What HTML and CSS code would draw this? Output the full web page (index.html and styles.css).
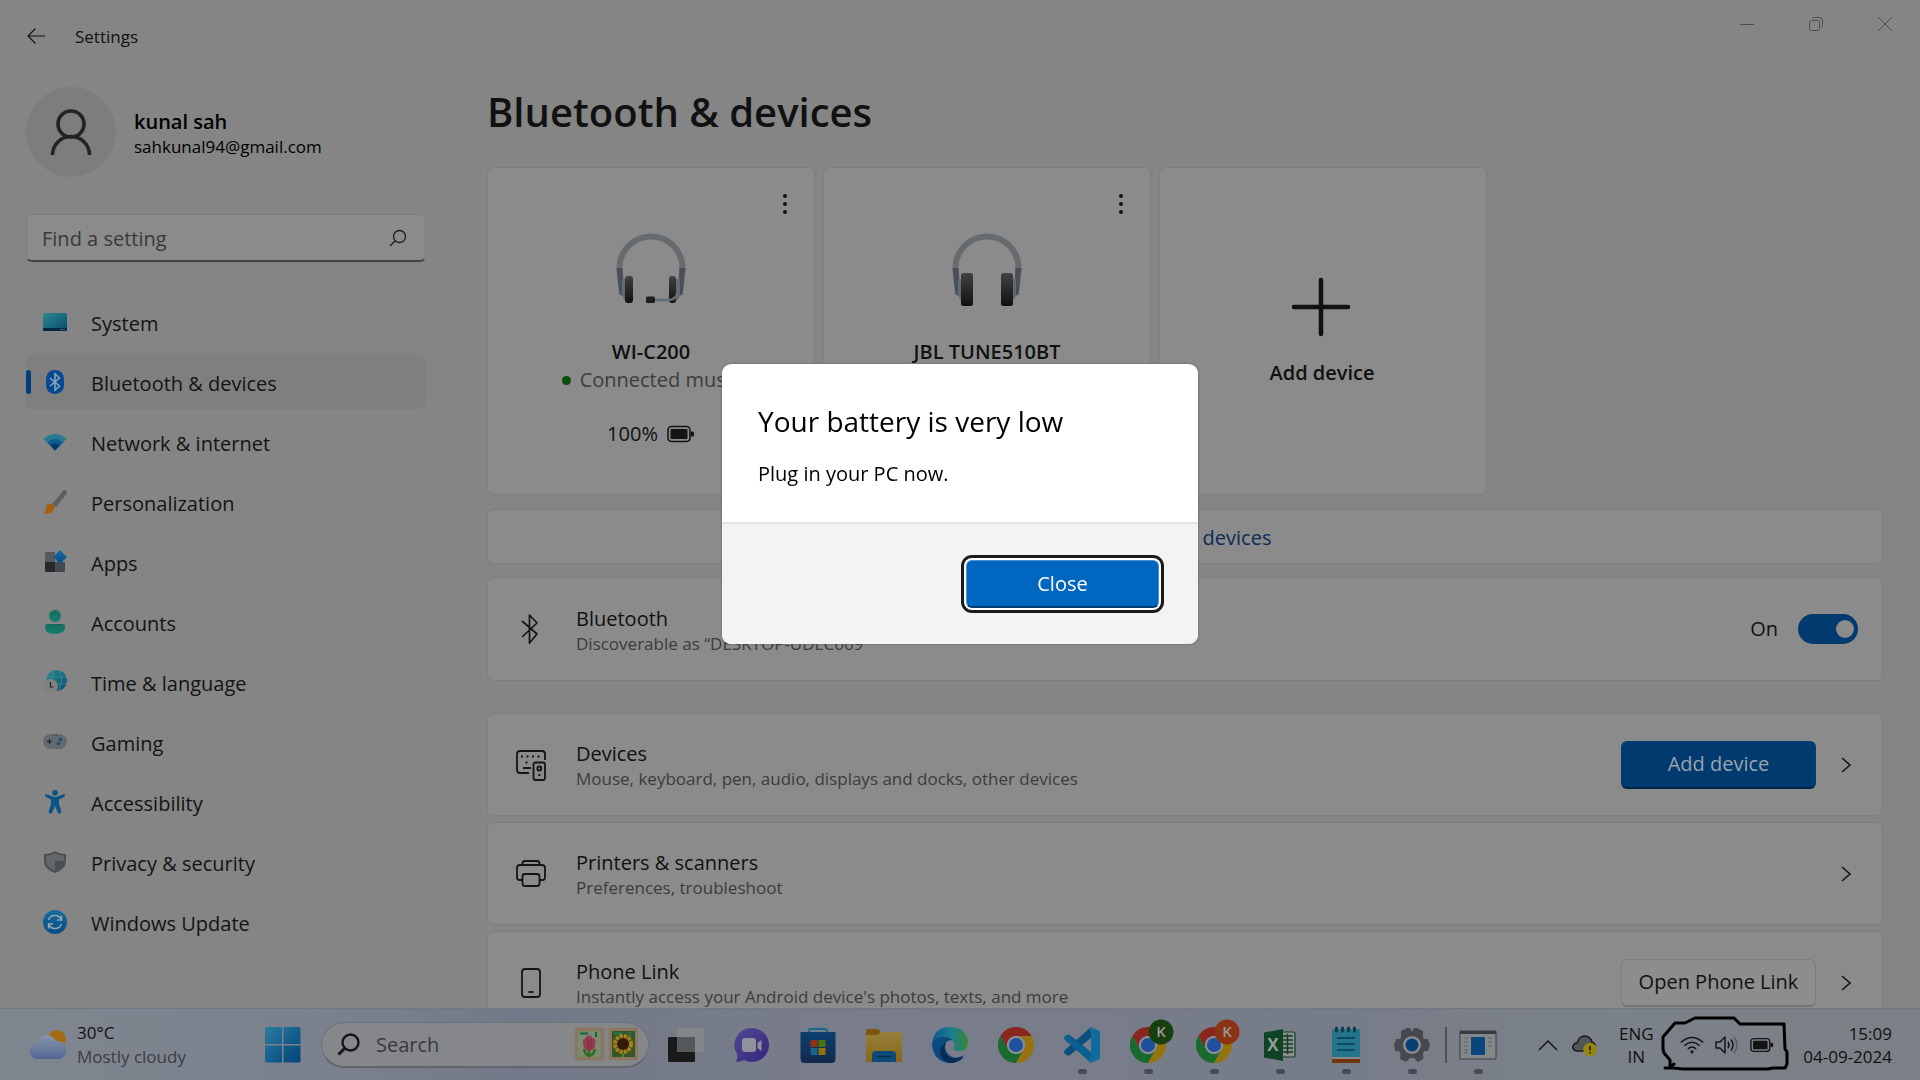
FILE: index.html
```html
<!DOCTYPE html>
<html lang="en">
<head>
<meta charset="utf-8">
<title>Settings</title>
<link rel="stylesheet" href="styles.css">
</head>
<body>
<svg class="defs" aria-hidden="true">
  <defs>
    <linearGradient id="g-screen" x1="0" y1="0" x2="1" y2="1"><stop offset="0" stop-color="#2a8a8c"/><stop offset="1" stop-color="#0b4a73"/></linearGradient>
    <linearGradient id="g-blue" x1="0" y1="0" x2="1" y2="1"><stop offset="0" stop-color="#2a7d9f"/><stop offset="1" stop-color="#02437a"/></linearGradient>
    <linearGradient id="g-sky" x1="0" y1="0" x2="0" y2="1"><stop offset="0" stop-color="#156c9e"/><stop offset="1" stop-color="#064c86"/></linearGradient>
    <linearGradient id="g-teal" x1="0" y1="0" x2="0" y2="1"><stop offset="0" stop-color="#176a5c"/><stop offset="1" stop-color="#148070"/></linearGradient>
    <linearGradient id="g-pad" x1="0" y1="0" x2="0" y2="1"><stop offset="0" stop-color="#424242"/><stop offset="1" stop-color="#101010"/></linearGradient>
    <linearGradient id="g-cloud" x1="0" y1="0" x2="0" y2="1"><stop offset="0" stop-color="#8795aa"/><stop offset="1" stop-color="#536694"/></linearGradient>
    <linearGradient id="g-chat" x1="0" y1="0" x2="1" y2="1"><stop offset="0" stop-color="#504a91"/><stop offset="1" stop-color="#35247f"/></linearGradient>
    <linearGradient id="g-store" x1="0" y1="0" x2="0" y2="1"><stop offset="0" stop-color="#0b3f70"/><stop offset="1" stop-color="#14294b"/></linearGradient>
    <linearGradient id="g-folder" x1="0" y1="0" x2="0" y2="1"><stop offset="0" stop-color="#94803c"/><stop offset="1" stop-color="#8b6716"/></linearGradient>
    <linearGradient id="g-edge" x1="0" y1="0" x2="1" y2="0"><stop offset="0" stop-color="#0c568a"/><stop offset=".5" stop-color="#1a7c93"/><stop offset="1" stop-color="#36863a"/></linearGradient>
    <symbol id="chrome" viewBox="0 0 24 24">
      <path fill="#8a2620" d="M1.6 6A12 12 0 0 1 22.4 6H12A6 6 0 0 0 6.8 15z"/>
      <path fill="#186a2f" d="M1.6 6 6.8 15A6 6 0 0 0 17.2 15L12 24A12 12 0 0 1 1.6 6z"/>
      <path fill="#96730f" d="M22.4 6A12 12 0 0 1 12 24l5.200-9A6 6 0 0 0 12 6z"/>
      <circle cx="12" cy="12" r="6" fill="#8d8f93"/><circle cx="12" cy="12" r="4.700" fill="#1f4f9f"/>
    </symbol>
    <symbol id="chevron" viewBox="0 0 12 18"><path d="M2 2l8 7-8 7" fill="none" stroke="#141414" stroke-width="1.600"/></symbol>
    <symbol id="band" viewBox="0 0 70 74">
      <path d="M3.500 38v-3a31.500 31.500 0 0 1 63 0v3" fill="none" stroke="#666b70" stroke-width="6"/>
      <path d="M.5 35h6l2 27q-5 2-5.500-3zM69.500 35h-6l-2 27q5 2 5.500-3z" fill="#4a5056"/>
      <path d="M6 46h4v22q-4-3-4-8zM64 46h-4v22q4-3 4-8z" fill="#626a72"/>
    </symbol>
    <symbol id="battery" viewBox="0 0 28 18">
      <rect x="1" y="1.500" width="22" height="15" rx="3.500" fill="none" stroke="#141414" stroke-width="1.600"/>
      <rect x="3.500" y="4" width="17" height="10" rx="1" fill="#141414"/><path d="M24 6.500h1.500q1.500 0 1.500 1.500v2q0 1.500-1.500 1.500H24z" fill="#141414"/>
    </symbol>
  </defs>
</svg>

<div class="desktop">
  <div class="window">
    <header class="titlebar">
      <button class="back" aria-label="Back"><svg width="20" height="18" viewBox="0 0 20 18"><path d="M9.500 1.500 2 9l7.500 7.500M2 9h17" fill="none" stroke="#141414" stroke-width="1.200"/></svg></button>
      <span class="app-name">Settings</span>
      <div class="controls">
        <button aria-label="Minimize"><svg width="16" height="16"><path d="M1 8.500h14" stroke="#4c4c4c"/></svg></button>
        <button aria-label="Restore"><svg width="16" height="16" fill="none" stroke="#4c4c4c"><rect x="1.500" y="4.500" width="10" height="10" rx="2"/><path d="M4.500 2.500q.5-1 2-1h5q3 0 3 3v5q0 1.500-1 2"/></svg></button>
        <button aria-label="Close window"><svg width="16" height="16"><path d="M1 1l14 14M15 1 1 15" stroke="#4c4c4c"/></svg></button>
      </div>
    </header>

    <div class="body">
      <aside class="sidebar">
        <div class="profile">
          <div class="avatar"><svg width="42" height="48" viewBox="0 0 42 48" fill="none" stroke="#232323" stroke-width="3.600"><circle cx="21" cy="16" r="13"/><path d="M2.500 47a18.500 18.500 0 0 1 37 0"/></svg></div>
          <div class="who"><strong>kunal sah</strong><span>sahkunal94@gmail.com</span></div>
        </div>
        <div class="find">
          <input type="text" placeholder="Find a setting" aria-label="Find a setting">
          <svg width="18" height="18" viewBox="0 0 18 18" fill="none" stroke="#202020" stroke-width="1.300"><circle cx="10.500" cy="7.500" r="6"/><path d="M6.200 11.800 1 17"/></svg>
        </div>
        <nav class="nav">
          <a href="#"><svg viewBox="0 0 24 24"><rect y="3" width="24" height="18" rx="1.500" fill="url(#g-screen)"/><path d="M0 18h24v1.500q0 1.500-1.500 1.500h-21Q0 21 0 19.500z" fill="#0a2740"/><path d="M18 19.500h1M20.500 19.500h1" stroke="#7aa"/></svg>System</a>
          <a href="#" class="active" aria-current="page"><svg viewBox="0 0 24 24"><rect x="3" width="18" height="24" rx="8.500" fill="#064a92"/><path d="M7 8l9.500 8-4.500 4V4l4.500 4L7 16" fill="none" stroke="#92a5ba" stroke-width="1.500"/></svg>Bluetooth &amp; devices</a>
          <a href="#"><svg viewBox="0 0 24 24"><path d="M.5 9Q12-1 23.500 9L12 20.500z" fill="#267a92"/><path d="M4 12.500q8-7 16 0l-8 8z" fill="#0f5a8c"/><path d="M7.500 15.500q4.500-4 9 0l-4.500 5z" fill="#06366a"/></svg>Network &amp; internet</a>
          <a href="#"><svg viewBox="0 0 24 24"><path d="M22 0q3 0 1.500 4L13 17l-4-3L20 1q1-1 2-1z" fill="#5b6065"/><path d="M7 13.500q5 .5 4.500 5Q9 25 0 23.500q3-2 3-5.500 0-4 4-4.500z" fill="#a0600e"/></svg>Personalization</a>
          <a href="#"><svg viewBox="0 0 24 24"><path d="M2 3.500q0-1.500 1.500-1.500H12v10H2z" fill="#54595e"/><path d="M2 12h10v10H3.500Q2 22 2 20.500z" fill="#272a2d"/><path d="M12 12h10v8.500q0 1.500-1.500 1.500H12z" fill="#45494d"/><path d="M17 0l7 7-7 7-6.500-7z" fill="url(#g-sky)"/></svg>Apps</a>
          <a href="#"><svg viewBox="0 0 24 24" fill="url(#g-teal)"><circle cx="12" cy="6" r="6"/><path d="M4.500 14h15q2.500 0 2.500 3 0 7-10 7T2 17q0-3 2.500-3z"/></svg>Accounts</a>
          <a href="#"><svg viewBox="0 0 24 24"><circle cx="13.500" cy="10.500" r="10.500" fill="url(#g-screen)"/><path d="M4 7h19M10 14h13M11 1q-4 10 1 20M16 1q5 9 0 19" fill="none" stroke="#358f9c" stroke-width=".8"/><circle cx="7.500" cy="16.500" r="7.500" fill="#818181"/><path d="M7.500 12v5h3" fill="none" stroke="#222" stroke-width="1.200"/></svg>Time &amp; language</a>
          <a href="#"><svg viewBox="0 0 24 24"><rect y="4" width="24" height="15" rx="7.500" fill="#64696f"/><path d="M4 11.500h5M6.500 9v5" stroke="#222" stroke-width="1.200"/><circle cx="17.500" cy="9.500" r="1.700" fill="#124c82"/><circle cx="15.500" cy="13.500" r="1.700" fill="#124c82"/><path d="M10.500 5.500h1M13 5.500h1" stroke="#333"/></svg>Gaming</a>
          <a href="#"><svg viewBox="0 0 24 24" fill="#0b5488"><circle cx="12" cy="2.800" r="2.800"/><path d="M3 4q7 3 9 3t9-3q2 1 0 3l-5 2.500V14l2.500 8q-1.500 3-3.500 1l-3-7-3 7q-2 2-3.500-1L8 14V9.500L3 7q-2-2 0-3z"/></svg>Accessibility</a>
          <a href="#"><svg viewBox="0 0 24 24"><path d="M12 1q4 3 11 3v7q0 8-11 12Q1 19 1 11V4q7 0 11-3z" fill="#4b4e51"/><path d="M12 3q3.500 2.500 9 2.500V11H12zM12 3v18Q3 17 3 11V5.500Q8.500 5.500 12 3z" fill="#63676a"/></svg>Privacy &amp; security</a>
          <a href="#"><svg viewBox="0 0 24 24"><circle cx="12" cy="12" r="12" fill="url(#g-sky)"/><path d="M5.500 10q2-5 7-4.500 3.500 0 6 4M18.500 5.500v4.500H14M18.500 14q-2 5-7 4.500-3.500 0-6-4M5.500 18.500V14H10" fill="none" stroke="#9aa5ad" stroke-width="1.500"/></svg>Windows Update</a>
        </nav>
      </aside>

      <main class="content">
        <h1>Bluetooth &amp; devices</h1>
        <section class="cards">
          <article class="card">
            <button class="more" aria-label="More options for WI-C200"><svg width="4" height="20" fill="#141414"><circle cx="2" cy="2" r="2"/><circle cx="2" cy="10" r="2"/><circle cx="2" cy="18" r="2"/></svg></button>
            <svg class="phones" viewBox="0 0 70 74"><use href="#band"/><rect x="9" y="43" width="8" height="27" rx="3" fill="url(#g-pad)"/><rect x="53" y="43" width="7" height="27" rx="3" fill="url(#g-pad)"/><path d="M62 46v10q0 11-10 11H38" fill="none" stroke="#636b73" stroke-width="2.500"/><rect x="30" y="63.500" width="9" height="6.500" rx="1.500" fill="#1f1f1f"/></svg>
            <h2>WI-C200</h2>
            <p class="status"><span class="dot"></span>Connected music</p>
            <p class="charge">100% <svg width="28" height="18"><use href="#battery"/></svg></p>
          </article>
          <article class="card">
            <button class="more" aria-label="More options for JBL TUNE510BT"><svg width="4" height="20" fill="#141414"><circle cx="2" cy="2" r="2"/><circle cx="2" cy="10" r="2"/><circle cx="2" cy="18" r="2"/></svg></button>
            <svg class="phones" viewBox="0 0 70 74"><use href="#band"/><rect x="9" y="40" width="12" height="33" rx="2.500" fill="url(#g-pad)"/><rect x="49" y="40" width="12" height="33" rx="2.500" fill="url(#g-pad)"/></svg>
            <h2>JBL TUNE510BT</h2>
          </article>
          <button class="card add"><svg width="60" height="60"><path d="M29 3v54M2 30h54" stroke="#111" stroke-width="4.500" stroke-linecap="round"/></svg>Add device</button>
        </section>
        <a class="view-more" href="#">View more devices</a>
        <section class="row first">
          <svg class="row-icon" width="32" height="36" viewBox="0 0 32 36" fill="none" stroke="#141414" stroke-width="1.700"><path d="M7 10l15 13-7.500 9V4L22 12 7 26" stroke-linejoin="round"/></svg>
          <div class="label"><h3>Bluetooth</h3><p>Discoverable as “DESKTOP-UDLC669”</p></div>
          <label class="switch">On<input type="checkbox" role="switch" checked></label>
        </section>
        <div class="rows">
          <section class="row">
            <svg class="row-icon" width="32" height="36" viewBox="0 0 32 36" fill="none" stroke="#141414" stroke-width="1.800"><path d="M14 26H5q-3 0-3-3V7q0-3 3-3h22q3 0 3 3v6"/><rect x="18.500" y="15.500" width="11.500" height="17.500" rx="2"/><circle cx="24.300" cy="21.500" r="2"/><path d="M6 9.500h2M11.500 9.500h2M17 9.500h2M22.500 9.500h2M10.500 15.500h2M8 21h8M23.300 28h2" stroke-width="2"/></svg>
            <div class="label"><h3>Devices</h3><p>Mouse, keyboard, pen, audio, displays and docks, other devices</p></div>
            <button class="btn primary">Add device</button>
            <svg class="go" width="12" height="18"><use href="#chevron"/></svg>
          </section>
          <section class="row">
            <svg class="row-icon" width="32" height="36" viewBox="0 0 32 36" fill="none" stroke="#141414" stroke-width="1.800"><path d="M7.500 9V7.500q0-2.500 2.500-2.500h12q2.500 0 2.500 2.500V9M7.500 24H4.500Q2 24 2 21.500V12q0-3 3-3h22q3 0 3 3v9.500q0 2.500-2.500 2.500h-3"/><rect x="7.500" y="18" width="17" height="12" rx="2.500"/></svg>
            <div class="label"><h3>Printers &amp; scanners</h3><p>Preferences, troubleshoot</p></div>
            <svg class="go" width="12" height="18"><use href="#chevron"/></svg>
          </section>
          <section class="row">
            <svg class="row-icon" width="32" height="36" viewBox="0 0 32 36" fill="none" stroke="#141414" stroke-width="1.800"><rect x="7" y="4" width="18" height="28" rx="3"/><path d="M13.500 27h5"/></svg>
            <div class="label"><h3>Phone Link</h3><p>Instantly access your Android device's photos, texts, and more</p></div>
            <button class="btn">Open Phone Link</button>
            <svg class="go" width="12" height="18"><use href="#chevron"/></svg>
          </section>
        </div>
      </main>
    </div>
  </div>

  <footer class="taskbar">
    <button class="weather">
      <svg width="38" height="36" viewBox="0 0 38 36"><circle cx="27" cy="12" r="9" fill="#a56a14"/><path d="M8 32a7.500 7.500 0 0 1-1-15A10 10 0 0 1 26 14a9 9 0 0 1 3 18z" fill="url(#g-cloud)"/><path d="M14 22q6-7 13-3" fill="none" stroke="#7c8aa6" stroke-width="1"/></svg>
      <span><b>30°C</b><i>Mostly cloudy</i></span>
    </button>
    <button class="start" aria-label="Start"><svg width="36" height="36" fill="url(#g-blue)"><path d="M0 1.500Q0 0 1.500 0H17v17H0zM18.500 0H34q1.500 0 1.500 1.500V17h-17zM0 18.500h17v17H1.500Q0 35.500 0 34zM18.500 18.500h17V34q0 1.500-1.500 1.500H18.500z"/></svg></button>
    <div class="search">
      <svg width="24" height="24" viewBox="0 0 24 24" fill="none" stroke="#151719" stroke-width="2.400"><circle cx="13.500" cy="10.500" r="8"/><path d="M7.500 16.500 1.500 22.500" stroke-width="3"/></svg>
      <input type="text" placeholder="Search" aria-label="Search">
      <svg width="64" height="34" viewBox="0 0 64 34">
        <rect x="1.500" y="1.500" width="28" height="31" fill="#8b775c" stroke="#8b775c" stroke-width="2" stroke-dasharray="2.500 1.500"/><rect x="4" y="4" width="23" height="26" fill="#7c8973"/><path d="M6 6.500h8M22 5v5" stroke="#176149" stroke-width="2"/><path d="M15 20v9M10 22q1 6 5 7 5-1 6-7" fill="none" stroke="#326b1d" stroke-width="2.500"/><path d="M9 13q2 0 3-3 3-3 6 0 1 2 3 2 2 11-6 12Q8 23 9 13z" fill="#983b50"/><path d="M13 11q3 5 1 12M17 11q1 6-1 12" fill="none" stroke="#7c2a42" stroke-width="1"/>
        <rect x="35.500" y="1.500" width="28" height="31" fill="#8b775c" stroke="#8b775c" stroke-width="2" stroke-dasharray="2.500 1.500"/><rect x="38" y="4" width="23" height="26" fill="#35562b"/><path d="M40 6.500h8M56 5v5" stroke="#217657" stroke-width="2"/><path d="M49 27v3" stroke="#4e8421" stroke-width="2"/><circle cx="49" cy="17" r="7.500" fill="none" stroke="#ac8011" stroke-width="5" stroke-dasharray="3 1"/><circle cx="49" cy="17" r="6" fill="#34190c"/>
      </svg>
    </div>
    <div class="apps">
      <button aria-label="Task view"><svg viewBox="0 0 36 36"><rect y="10" width="27" height="25" rx="1.500" fill="#1a1a1a"/><rect x="9" y="1" width="27" height="24" rx="1.500" fill="#85888a" opacity=".85"/><path d="M9 10h18v15H10.500Q9 25 9 23.500z" fill="#55585a"/></svg></button>
      <button aria-label="Chat"><svg viewBox="0 0 36 36"><path d="M18 1a17 17 0 1 1-8 32q-4 2-8 2 2-4 1-8A17 17 0 0 1 18 1z" fill="url(#g-chat)"/><rect x="8" y="11" width="14" height="14" rx="3" fill="#91919a"/><path d="M23.500 16l4-3v11l-4-3z" fill="#91919a"/></svg></button>
      <button aria-label="Store"><svg viewBox="0 0 36 36"><path d="M9 7V4q0-2 2-2h14q2 0 2 2v3" fill="none" stroke="#17688a" stroke-width="2"/><path d="M.5 5h35v27q0 4-4 4h-27q-4 0-4-4z" fill="url(#g-store)"/><path d="M10.500 13h7v7h-7z" fill="#8f3219"/><path d="M18.500 13h7v7h-7z" fill="#4b7310"/><path d="M10.500 21h7v7h-7z" fill="#14678b"/><path d="M18.500 21h7v7h-7z" fill="#957010"/></svg></button>
      <button aria-label="File Explorer"><svg viewBox="0 0 36 36"><path d="M0 3.500Q0 2 1.500 2h10q2 0 3 2.500L13 8H0z" fill="#7d570d"/><path d="M0 8h12l3-3h21v30H0z" fill="url(#g-folder)"/><path d="M6 35v-7q0-4 4-4h16q4 0 4 4v7z" fill="#0e4a78"/><path d="M11 29.500h14" stroke="#072b4e" stroke-width="1.500"/></svg></button>
      <button aria-label="Edge"><svg viewBox="0 0 36 36"><path d="M0 18Q1 0 18 0q17 1 18 15 0 9-9 9-6 0-6-3 3-3 1-6-5-5-12 0-7 4-10 3z" fill="url(#g-edge)"/><path d="M0 18q3-8 11-8 7 0 9 3-7 0-7 7 2 11 14 11 3 0 5-1-5 6-14 6Q2 35 0 18z" fill="#0b4a7e"/><path d="M14 16q-4 8 2 13 7 5 16-1-5 8-14 8-9-2-10-11 0-6 6-9z" fill="#0a2a58"/></svg></button>
      <button aria-label="Chrome"><svg viewBox="0 0 36 36"><use href="#chrome"/></svg></button>
      <button class="running" aria-label="Visual Studio Code"><svg viewBox="0 0 36 36"><path d="M26 1 1 23q-2 2 0 4l2 1q1 1 3 0L28 10z" fill="#0a4f7c"/><path d="M26 35 1 13q-2-2 0-4l2-1q1-1 3 0l22 18z" fill="#0b5e90"/><path d="M26 0l10 4v28l-10 4q-1 0-1-2l2-3V5l-2-3q0-2 1-2z" fill="#126b9f"/></svg></button>
      <button class="running" aria-label="Chrome, profile K"><svg viewBox="0 0 36 36"><use href="#chrome"/><circle cx="31" cy="5" r="12.500" fill="#183f10"/><text class="initial" x="31" y="10">K</text></svg></button>
      <button class="running" aria-label="Chrome, second profile K"><svg viewBox="0 0 36 36"><use href="#chrome"/><circle cx="31" cy="5" r="12.500" fill="#8b3413"/><text class="initial" x="31" y="10">K</text></svg></button>
      <button class="running" aria-label="Excel"><svg viewBox="0 0 36 36"><rect x="17" y="5" width="16" height="25" rx="1.500" fill="#8a9089" stroke="#123f26" stroke-width="1.200"/><path d="M20 9h11M20 13h11M20 17h11M20 21h11M20 25h11M25.500 7v20" stroke="#123f26" stroke-width="1.500"/><path d="M2 5.500 21 2v32L2 30.500z" fill="#0f4326"/><text class="excel" x="11" y="24">X</text></svg></button>
      <button class="running" aria-label="Notepad"><svg viewBox="0 0 36 36"><rect x="4" y="31" width="28" height="5" rx="1" fill="#71350c"/><path d="M4 4q0-2 2-2h24q2 0 2 2v27H4z" fill="#24758b"/><path d="M4 30h28v2H4z" fill="#888"/><path d="M9 11h18M9 17h18M9 23h18" stroke="#093d55" stroke-width="1.600"/><path d="M8.500 1v3M14.500 1v3M20.500 1v3M26.500 1v3" stroke="#133c4b" stroke-width="3" stroke-linecap="round"/></svg></button>
      <button class="running" aria-label="Settings"><svg viewBox="0 0 36 36"><path d="M13 1h3l2 4 2-4h3l6 3v6l1 2h4l2 6-2 6h-4l-1 3 .5 5-6 3-3.500-4h-4L12 35l-6-3 .5-5-1.500-3H1l-1-6 2-6h4l1-2V4z" fill="#45494f"/><circle cx="18" cy="18" r="9" fill="#888c92"/><circle cx="18" cy="18" r="6.500" fill="#063d72"/></svg></button>
      <button class="running divided" aria-label="Power notice"><svg viewBox="0 0 36 36"><path d="M0 4h36v28H0z" fill="#85888a" stroke="#3b3e42"/><path d="M0 4h36v3H0z" fill="#373a3e"/><path d="M4 11h4M4 15h4M4 19h4M4 23h4M4 26h4M28 11h4M28 15h4M28 19h4" stroke="#5d6064"/><rect x="11" y="10" width="14" height="18" fill="#08467c"/></svg></button>
    </div>
    <div class="tray">
      <button aria-label="Show hidden icons"><svg width="20" height="12"><path d="M1 11l9-9 9 9" fill="none" stroke="#15181b" stroke-width="1.500"/></svg></button>
      <button class="cloud" aria-label="OneDrive"><svg width="26" height="24" viewBox="0 0 26 24"><path d="M5 18q-5-1-4-5 1-3 4-3 2-7 8-7 6 1 7 6 4 2 3 6l-4 3z" fill="#53575b" stroke="#17191c" stroke-width="1.500"/><circle cx="18" cy="16.500" r="6.800" fill="#96860c"/><path d="M18 13v4.500M18 19v1.500" stroke="#141414" stroke-width="1.500"/></svg></button>
      <button class="lang">ENG<br>IN</button>
      <button class="quick" aria-label="Network, sound and battery">
        <svg class="scribble" width="128" height="56" viewBox="0 0 128 56"><path d="M4 53h8l10 1h85l5-1h12l2-4V37l-2-3-1-25H79l-6-6H34l-10 5H14L2 22v12l1 4 6 7v7M8 53l5-4" fill="none" stroke="#000" stroke-width="3" stroke-linejoin="round" stroke-linecap="round"/></svg>
        <svg width="24" height="18" viewBox="0 0 24 18" fill="none" stroke="#141618" stroke-width="1.500"><path d="M.8 6.500q11.200-10 22.400 0M4.300 9.800q7.700-7 15.400 0M7.800 13q4.200-4 8.400 0"/><circle cx="12" cy="15.800" r="1.600" fill="#141618" stroke="none"/></svg>
        <svg width="24" height="20" viewBox="0 0 24 20" fill="none" stroke="#141618" stroke-width="1.500"><path d="M1 7h4l5-5v16l-5-5H1z" stroke-linejoin="round"/><path d="M13 7q2 3 0 6M16 4.500q4 5.500 0 11"/><path d="M19 2q6 8 0 16" stroke="#5c6066"/></svg>
        <svg width="24" height="18"><use href="#battery"/></svg>
      </button>
      <button class="clock">15:09<br>04-09-2024</button>
    </div>
  </footer>
</div>

<div class="backdrop">
  <section class="dialog" role="alertdialog" aria-labelledby="dlg-title" aria-describedby="dlg-text">
    <div class="dialog-body"><h2 id="dlg-title">Your battery is very low</h2><p id="dlg-text">Plug in your PC now.</p></div>
    <div class="dialog-actions"><button>Close</button></div>
  </section>
</div>
</body>
</html>
```
FILE: styles.css
```css
:root {
  --ink: #111;
  --muted: #3c3c3c;
  --page: #858585;
  --card: #8b8b8b;
  --line: #7e7e7e;
  --accent: #003a6e;
  --text: 20px;
  --small: 17px;
}
* { box-sizing: border-box; }
body { margin: 0; background: var(--page); color: var(--ink); font: 400 var(--text)/28px "Open Sans", "Noto Sans", sans-serif; }
h1, h2, h3, p { margin: 0; }
button, input { margin: 0; padding: 0; border: 0; background: none; color: inherit; font: inherit; }
a { color: inherit; text-decoration: none; }
svg { display: block; flex: none; }
.defs { position: absolute; width: 0; height: 0; }

.desktop { display: flex; flex-direction: column; height: 100vh; }
.window { flex: 1; min-height: 0; overflow: hidden; }

.titlebar { display: flex; align-items: center; height: 72px; padding-left: 26px; }
.back { margin-right: 29px; }
.app-name { padding-top: 2px; font-size: var(--small); line-height: 24px; }
.controls { display: flex; align-self: flex-start; margin-left: auto; padding-right: 1px; }
.controls button { display: grid; place-items: center; width: 69px; height: 47px; }

.body { display: flex; }
.sidebar { flex: none; width: 487px; padding: 15px 61px 0 26px; }
.profile { display: flex; align-items: center; gap: 18px; margin-bottom: 37px; }
.avatar { display: grid; place-items: center; width: 90px; height: 90px; border-radius: 50%; background: #7d7d7d; }
.who { display: flex; flex-direction: column; padding-top: 3px; color: #000; }
.who strong { font-weight: 600; line-height: 26px; }
.who span { font-size: var(--small); line-height: 24px; }
.find { display: flex; align-items: center; height: 48px; margin-bottom: 33px; padding: 0 18px 0 15px; border: 1px solid var(--line); border-bottom: 2px solid #444; border-radius: 6px; background: var(--card); }
.find input { flex: 1; min-width: 0; padding-top: 2px; }
input::placeholder { color: #3a3a3a; opacity: 1; }
.nav { display: flex; flex-direction: column; gap: 6px; }
.nav a { display: flex; align-items: center; gap: 24px; height: 54px; padding: 3px 0 0 17px; border-radius: 6px; color: #141414; }
.nav svg { width: 24px; height: 24px; margin-bottom: 3px; }
.nav .active { padding-left: 12px; background: #7f7f7f; }
.nav .active::before { content: ""; width: 5px; height: 24px; margin: 0 -12px 3px; border-radius: 3px; background: #00407a; }

.content { flex: 1; min-width: 0; padding: 12px 37px 0 0; }
h1 { margin-bottom: 27px; font-size: 40px; font-weight: 600; line-height: 56px; }
.cards { display: flex; gap: 8px; margin-bottom: 14px; }
.card, .view-more, .row { border: 1px solid var(--line); border-radius: 6px; background: var(--card); }
.card { display: flex; flex-direction: column; align-items: center; width: 328px; height: 328px; padding-top: 19px; }
.more { display: grid; place-items: center; align-self: flex-end; width: 34px; height: 34px; margin: 0 12px 12px; }
.phones { width: 70px; height: 74px; margin-bottom: 31px; }
.card h2, .add { font-size: var(--text); font-weight: 600; line-height: 28px; }
.status { display: flex; align-items: center; gap: 9px; color: var(--muted); }
.dot { width: 9px; height: 9px; border-radius: 50%; background: #084d08; }
.charge { display: flex; align-items: center; gap: 9px; margin-top: 26px; }
.add { justify-content: center; gap: 22px; padding: 2px 2px 0 0; }
.view-more { display: grid; place-items: center; height: 55px; margin-bottom: 13px; padding-top: 2px; color: #0b2c55; }
.row { display: flex; align-items: center; height: 103px; padding: 0 24px 0 27px; }
.first { height: 104px; margin-bottom: 32px; }
.rows { display: flex; flex-direction: column; gap: 6px; }
.row-icon { margin-right: 29px; }
.label { flex: 1; min-width: 0; padding-top: 3px; }
.label h3 { font-size: var(--text); font-weight: 400; line-height: 26px; }
.label p { color: var(--muted); font-size: var(--small); line-height: 24px; }
.switch { display: flex; align-items: center; gap: 20px; }
.switch input { display: flex; align-items: center; justify-content: flex-end; width: 60px; height: 30px; padding-right: 4px; border-radius: 15px; background: var(--accent); appearance: none; }
.switch input::before { content: ""; width: 18px; height: 18px; border-radius: 50%; background: #8b8b8b; }
.btn { width: 195px; height: 48px; border: 1px solid var(--line); border-bottom: 2px solid #747474; border-radius: 6px; background: #8d8d8d; }
.primary { border-color: #00407a; border-bottom-color: #002446; background: var(--accent); color: #9aa4ad; }
.go { margin: 0 6px 0 24px; }

.taskbar { display: flex; flex: none; height: 72px; padding-right: 28px; border-top: 1px solid #72767f; background: linear-gradient(90deg, #7f8690 0%, #7c828d 15%, #737988 27%, #797d8b 45%, #777c89 70%, #7b8188 84%, #7b8086 100%); }
.weather { display: flex; align-items: center; gap: 9px; width: 265px; padding-left: 30px; text-align: left; font-size: var(--small); line-height: 24px; }
.weather b, .weather i { display: block; font-weight: 400; font-style: normal; }
.weather i { color: #3a3d42; }
.start { width: 36px; }
.search { display: flex; align-items: center; align-self: center; width: 328px; height: 46px; margin: 0 4px 0 20px; padding: 0 10px 0 15px; border: 1px solid #6c727d; border-bottom: 2px solid #60656f; border-radius: 23px; background: #85878a; }
.search input { flex: 1; min-width: 0; margin-left: 15px; padding-top: 2px; }
.apps { display: flex; }
.apps button { display: flex; flex-direction: column; align-items: center; gap: 6px; width: 66px; padding-top: 18px; }
.apps svg { width: 36px; height: 36px; overflow: visible; }
.running::after { content: ""; width: 9px; height: 5px; border-radius: 3px; background: #464a52; }
.apps .divided { background: linear-gradient(#4b5059, #4b5059) 0 18px / 2px 36px no-repeat; }
.initial { fill: #9a9a9a; font: 600 15px "Open Sans", sans-serif; text-anchor: middle; }
.excel { fill: #969c97; font: 700 17px "Open Sans", sans-serif; text-anchor: middle; }
.tray { display: flex; align-items: center; margin-left: auto; font-size: var(--small); line-height: 23px; }
.cloud { margin-left: 14px; }
.lang { width: 44px; margin-left: 16px; }
.quick { position: relative; display: flex; align-items: center; gap: 11px; margin: 0 29px 0 22px; }
.scribble { position: absolute; left: -19px; top: -20px; }
.clock { text-align: right; }

.backdrop { position: fixed; inset: 0 0 72px; display: grid; place-items: center; }
.dialog { width: 476px; border-radius: 9px; overflow: hidden; background: #fff; color: #000; box-shadow: 0 0 2px #555; }
.dialog-body { height: 160px; padding: 35px 36px 0; border-bottom: 2px solid #e5e5e5; }
.dialog h2 { margin-bottom: 17px; font-size: 28px; font-weight: 400; line-height: 44px; }
.dialog p { line-height: 28px; }
.dialog-actions { display: flex; justify-content: flex-end; height: 120px; padding: 36px 39px 0; background: #f3f3f3; }
.dialog button { width: 193px; height: 48px; border: 1px solid #4b93d3; border-bottom: 2px solid #003e73; border-radius: 6px; background: #0067c0; color: #fff; box-shadow: 0 0 0 2px #fff, 0 0 0 5px #1a1a1a; }
```
